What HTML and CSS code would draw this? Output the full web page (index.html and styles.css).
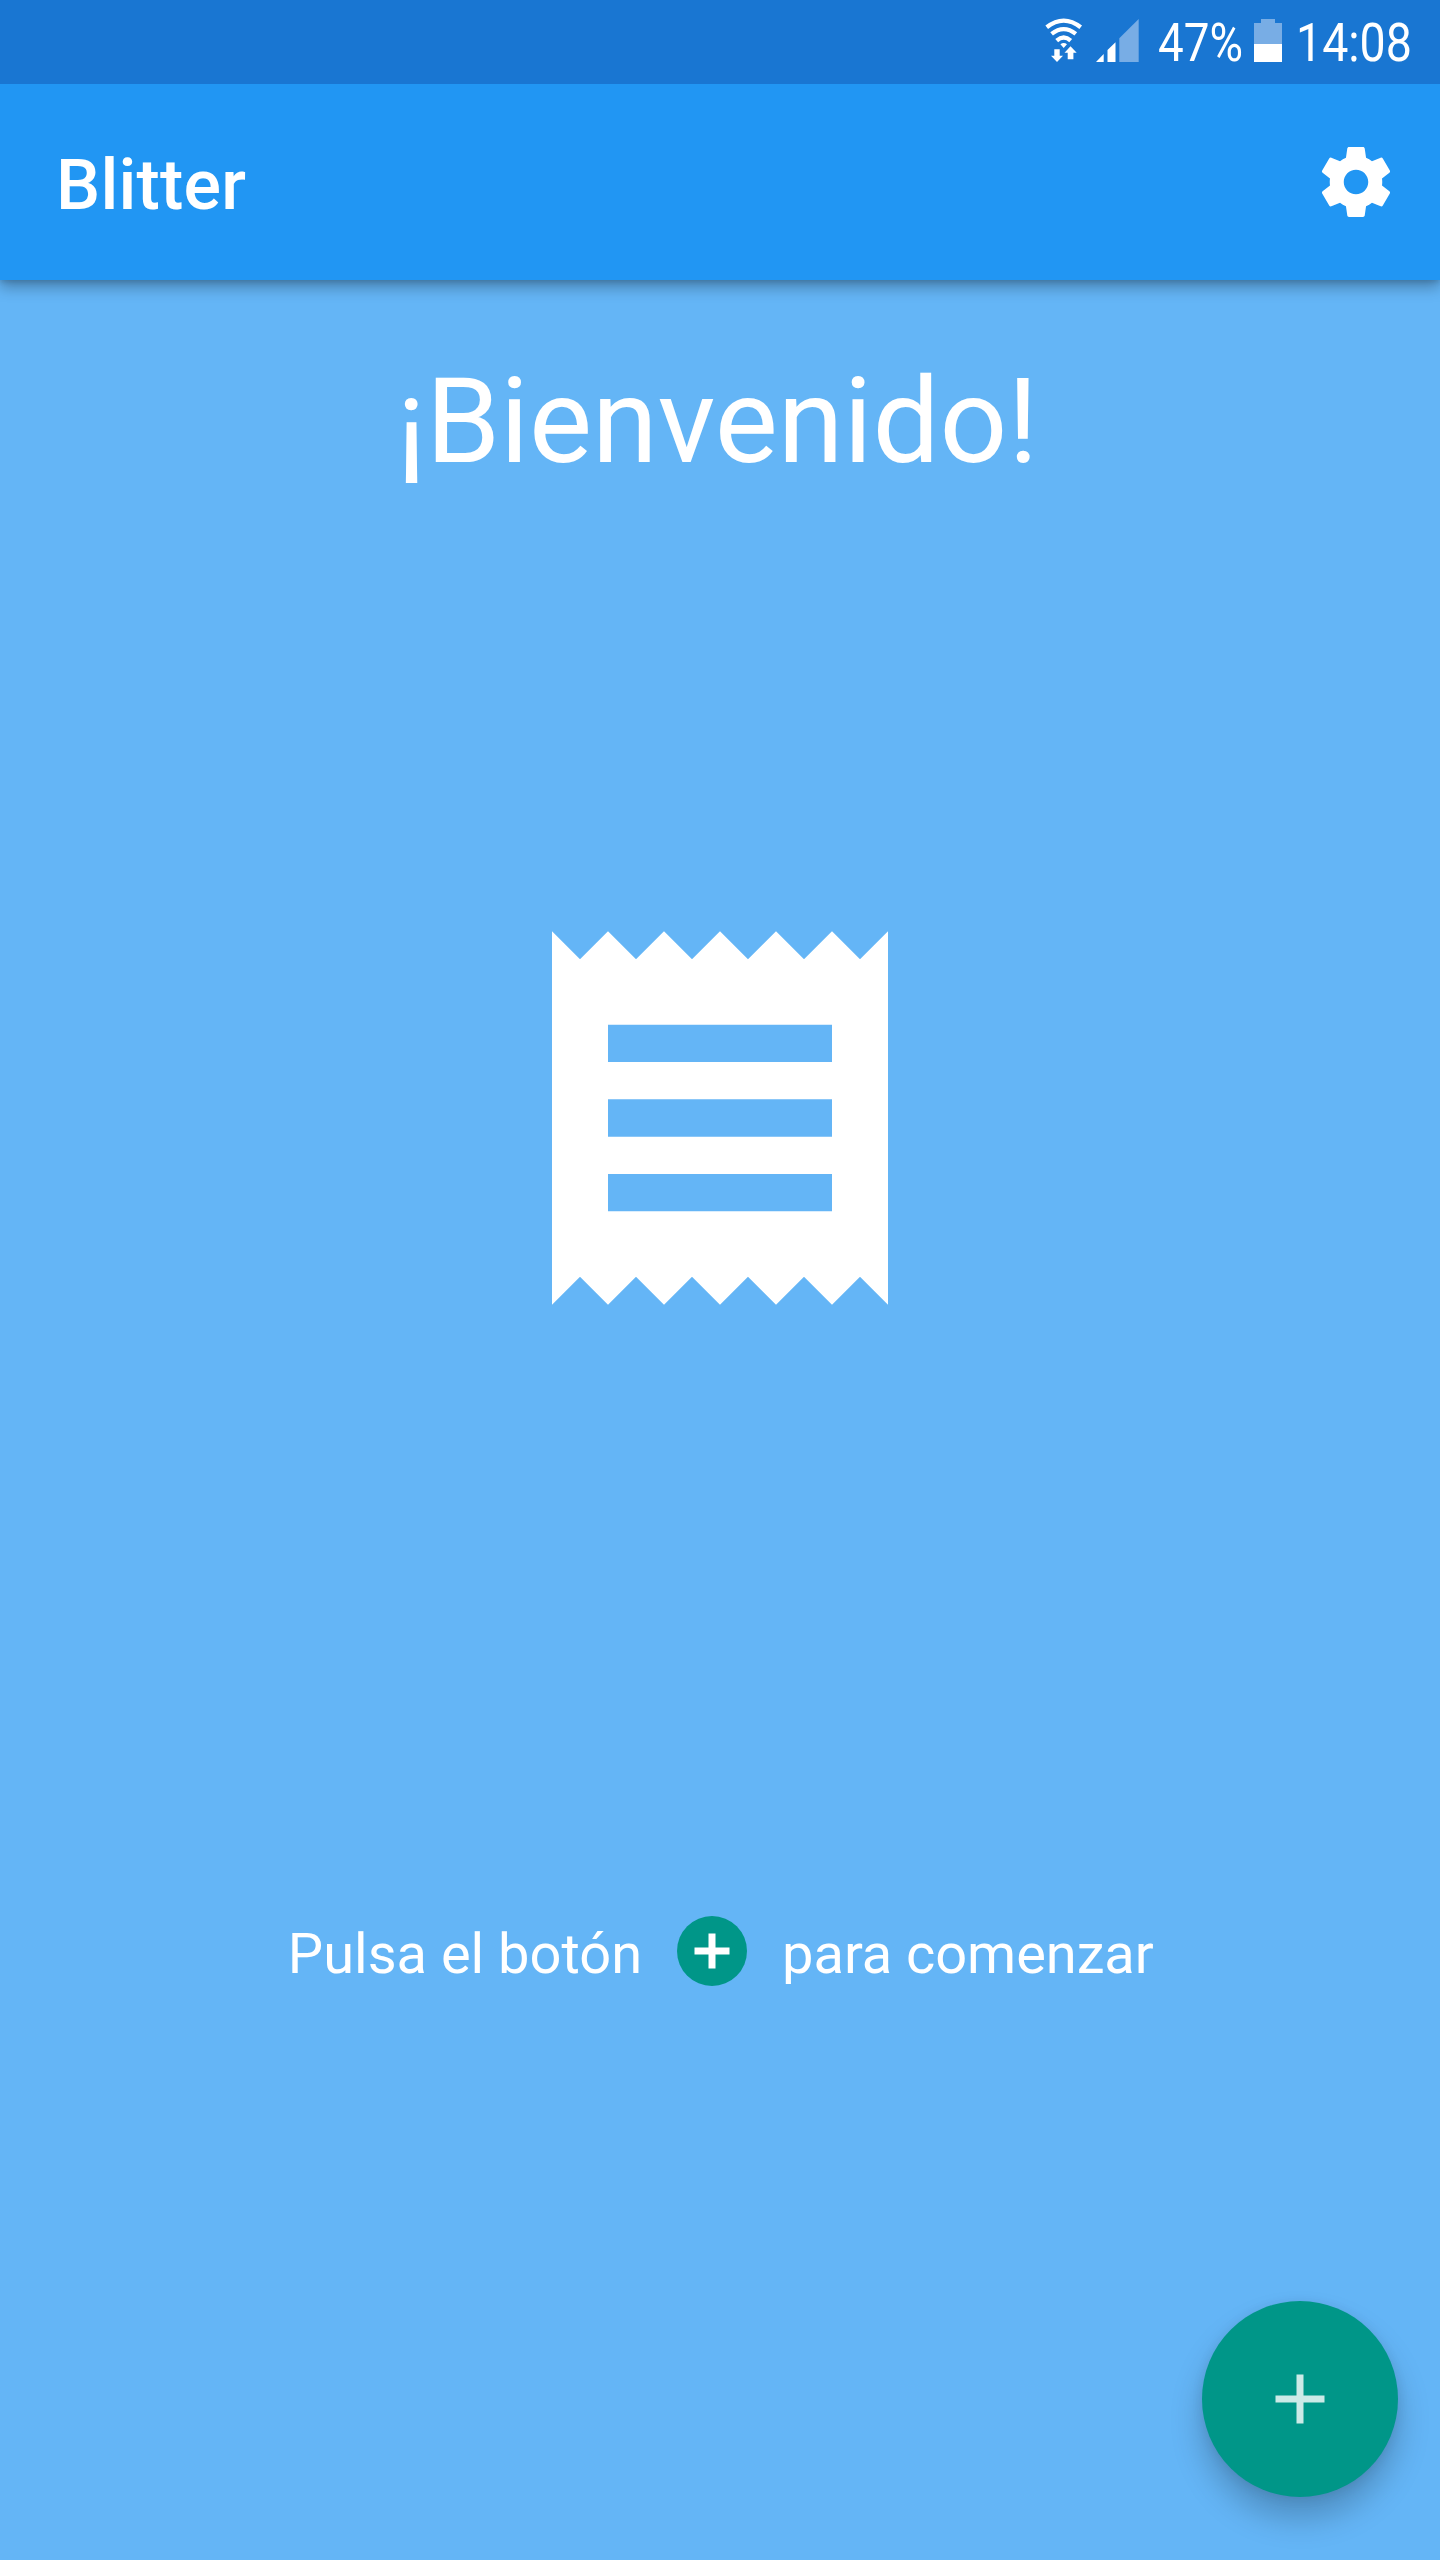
FILE: index.html
```html
<!DOCTYPE html>
<html lang="es">
<head>
<meta charset="utf-8">
<title>Blitter</title>
<link rel="stylesheet" href="styles.css">
</head>
<body>
<div class="screen">
  <div class="status-bar">
    <svg class="wifi" viewBox="0 0 38 46" width="38" height="46">
      <g fill="none" stroke="#fff" stroke-width="4.3">
        <path d="M1.700 9.200Q18.700 -4 35.700 9.200"/>
        <path d="M6.600 15.900Q18.700 6.300 30.800 15.900"/>
        <path d="M11.700 22.600Q18.700 16.400 25.700 22.600"/>
      </g>
      <path fill="#fff" d="M15.400 26.200Q18.700 23.600 22 26.200L18.700 30z"/>
      <path fill="#fff" d="M9.300 31.300h5.400v6.400h3.300l-6 6.300-6-6.300h3.300zM22.700 41.300h5.700v-6.600h3.300L25.500 28.300l-6 6.400h3.200z"/>
    </svg>
    <svg class="signal" viewBox="0 0 43 43" width="43" height="43">
      <path fill="#fff" d="M0 43L7.700 35V43zM11.500 31L19.500 23.300V43H11.500z"/>
      <path fill="#78ade5" d="M23.300 19.200L42.700 0V43H23.300z"/>
    </svg>
    <span class="status-text percent">47%</span>
    <svg class="battery" viewBox="0 0 28 43" width="28" height="43">
      <path fill="#78ade5" d="M7 0h14v4h7v21H0V4h7z"/>
      <path fill="#fff" d="M0 25h28v18H0z"/>
    </svg>
    <span class="status-text clock">14:08</span>
  </div>
  <header class="app-bar">
    <h1 class="app-title">Blitter</h1>
    <svg class="icon" viewBox="0 0 24 24"><path fill="#fff" d="M19.430 12.980c.04-.32.07-.64.07-.98s-.03-.66-.07-.98l2.110-1.650c.19-.15.24-.42.12-.64l-2-3.460c-.12-.22-.39-.3-.61-.22l-2.490 1c-.52-.4-1.080-.73-1.690-.98l-.38-2.650C14.460 2.180 14.250 2 14 2h-4c-.25 0-.46.18-.49.42l-.38 2.650c-.61.25-1.170.59-1.690.98l-2.490-1c-.23-.09-.49 0-.61.22l-2 3.460c-.13.22-.07.49.12.64l2.110 1.650c-.04.32-.07.65-.07.98s.03.66.07.98l-2.110 1.650c-.19.15-.24.42-.12.64l2 3.460c.12.22.39.3.61.22l2.490-1c.52.4 1.080.73 1.690.98l.38 2.650c.03.24.24.42.49.42h4c.25 0 .46-.18.49-.42l.38-2.650c.61-.25 1.170-.59 1.690-.98l2.490 1c.23.09.49 0 .61-.22l2-3.460c.12-.22.07-.49-.12-.64l-2.110-1.650zM12 15.500c-1.930 0-3.500-1.570-3.500-3.500s1.570-3.500 3.500-3.500 3.500 1.570 3.500 3.500-1.570 3.500-3.500 3.500z"/></svg>
  </header>
  <main class="content">
    <h2 class="welcome">¡Bienvenido!</h2>
    <svg class="receipt" viewBox="0 0 24 24"><path fill="#fff" d="M18 17H6v-2h12v2zm0-4H6v-2h12v2zm0-4H6V7h12v2zM3 22l1.500-1.500L6 22l1.500-1.500L9 22l1.500-1.500L12 22l1.500-1.500L15 22l1.500-1.500L18 22l1.500-1.500L21 22V2l-1.500 1.500L18 2l-1.500 1.500L15 2l-1.500 1.500L12 2l-1.500 1.500L9 2 7.500 3.500 6 2 4.500 3.500 3 2v20z"/></svg>
    <p class="hint">
      <span>Pulsa el botón</span>
      <svg class="icon" viewBox="0 0 24 24"><circle cx="12" cy="12" r="10" fill="#009688"/><path fill="#fff" d="M17 13h-4v4h-2v-4H7v-2h4V7h2v4h4v2z"/></svg>
      <span class="hint-end">para comenzar</span>
    </p>
  </main>
  <button class="fab" aria-label="Añadir">
    <svg class="icon" viewBox="0 0 24 24"><path fill="#fff" fill-opacity=".8" d="M19 13h-6v6h-2v-6H5v-2h6V5h2v6h6v2z"/></svg>
  </button>
</div>
</body>
</html>
```
FILE: styles.css
```css
body {
  margin: 0;
  font-family: Roboto, "Noto Sans", sans-serif;
  color: #fff;
}

.screen {
  position: relative;
  display: flex;
  flex-direction: column;
  width: 1440px;
  height: 2560px;
  overflow: hidden;
  background: #64b5f6;
}

.status-bar {
  position: relative;
  z-index: 1;
  display: flex;
  align-items: flex-start;
  justify-content: flex-end;
  box-sizing: border-box;
  height: 84px;
  padding: 18px 28px 0 0;
  background: #1976d2;
}

.status-bar svg {
  flex: none;
  margin-top: 1px;
}

.status-bar .wifi {
  margin: 0 13px 0 0;
}

.status-bar .signal {
  margin-right: 18.5px;
}

.status-text {
  font-size: 53.5px;
  line-height: 50px;
  white-space: nowrap;
  transform-origin: 0 50%;
}

.percent {
  width: 96.5px;
  transform: scaleX(.855);
}

.clock {
  width: 116px;
  margin-left: 14px;
  transform: scaleX(.87);
}

.app-bar {
  display: flex;
  flex: none;
  align-items: center;
  justify-content: space-between;
  box-sizing: border-box;
  height: 196px;
  padding: 0 42px 0 56px;
  background: #2196f3;
  box-shadow: 0 7px 14px rgba(0, 0, 0, .3), 0 2px 5px rgba(0, 0, 0, .12);
}

.app-title {
  margin: 6px 0 0;
  font-size: 70px;
  font-weight: 500;
  letter-spacing: .2px;
  line-height: 82px;
}

.icon {
  display: block;
  flex: none;
  width: 84px;
  height: 84px;
}

.content {
  display: flex;
  flex: 1;
  flex-direction: column;
  align-items: center;
}

.welcome {
  margin: 72px 5px 0 0;
  font-size: 119px;
  font-weight: 400;
  line-height: 140px;
}

.receipt {
  flex: none;
  width: 448px;
  height: 448px;
  margin-top: 402px;
}

.hint {
  display: flex;
  align-items: center;
  gap: 28px;
  margin: 567px 0 0 1.5px;
  font-size: 56px;
  line-height: 66px;
}

.hint span {
  padding-top: 6px;
}

.hint-end {
  letter-spacing: -.06px;
}

.fab {
  position: absolute;
  right: 42px;
  bottom: 63px;
  display: flex;
  align-items: center;
  justify-content: center;
  width: 196px;
  height: 196px;
  padding: 0;
  border: 0;
  border-radius: 50%;
  background: #009688;
  box-shadow: 0 21px 32px rgba(0, 0, 0, .22), 0 2px 12px rgba(0, 0, 0, .08);
}
```
